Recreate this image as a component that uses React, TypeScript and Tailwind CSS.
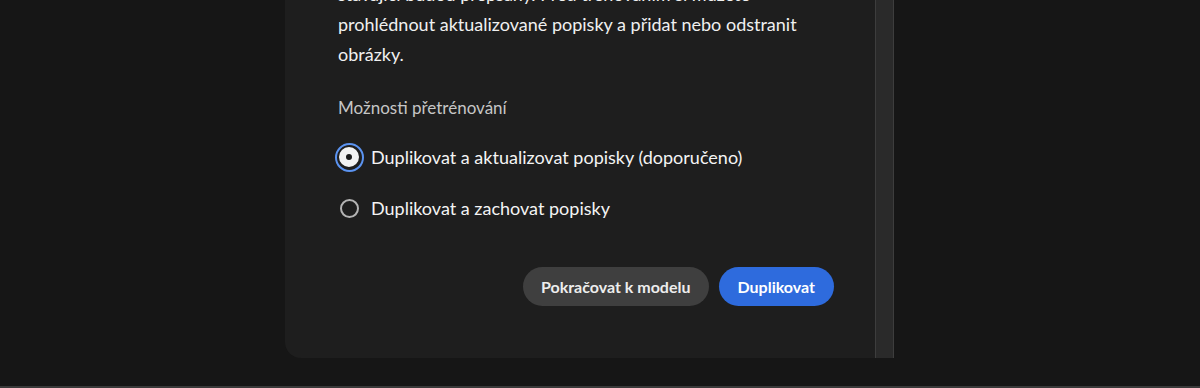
import React, { useState } from 'react';

const options = [
  { id: 'update', label: 'Duplikovat a aktualizovat popisky (doporučeno)' },
  { id: 'keep', label: 'Duplikovat a zachovat popisky' },
];

const Radio = (props: { checked: boolean; focused?: boolean }) => {
  return (
    <span className="flex h-[28px] w-[28px] items-center justify-center">
      {props.checked ? (
        <span
          className={`flex h-[29px] w-[29px] shrink-0 items-center justify-center rounded-full ${
            props.focused ? 'border-2 border-[#5b93f0]' : ''
          }`}
        >
          <span className="h-[20px] w-[20px] rounded-full border-[7px] border-[#f2f2f2] bg-[#1b1b1b]" />
        </span>
      ) : (
        <span className="h-[19px] w-[19px] rounded-full border-2 border-[#b4b4b4]" />
      )}
    </span>
  );
};

const App = () => {
  const [selected, setSelected] = useState('update');

  return (
    <div
      className="box-border h-[388px] w-full overflow-hidden border-b-2 border-[#3a3a3a] bg-[#161616]"
      style={{ fontFamily: 'Lato, "Noto Sans", sans-serif' }}
    >
      <div className="ml-[285px] -mt-[40px] flex h-[398px] w-[609px] overflow-hidden rounded-b-[16px] rounded-br-none bg-[#1e1e1e]">
        <div className="flex flex-1 flex-col pl-[53px] pr-[41px] pt-[19px]">
          <p className="text-[18px] leading-[30px] text-[#f0f0f0]">
            stávající budou přepsány. Před trénováním si můžete prohlédnout
            aktualizované popisky a přidat nebo odstranit obrázky.
          </p>

          <div className="mt-[27px] text-[17px] leading-[24px] text-[#c6c6c6]">
            Možnosti přetrénování
          </div>

          <div className="mt-[23px] flex flex-col gap-[23px]">
            {options.map(opt => (
              <button
                key={opt.id}
                type="button"
                onClick={() => setSelected(opt.id)}
                className="-ml-[3px] flex items-center gap-[8px] text-left"
              >
                <Radio checked={selected === opt.id} focused />
                <span className="text-[18px] leading-[28px] text-[#f4f4f4]">
                  {opt.label}
                </span>
              </button>
            ))}
          </div>

          <div className="mt-[45px] flex justify-end gap-[10px]">
            <button
              type="button"
              className="h-[39px] rounded-full bg-[#3f3f3f] px-[18px] text-[16px] font-bold text-[#ededed]"
            >
              Pokračovat k modelu
            </button>
            <button
              type="button"
              className="h-[39px] rounded-full bg-[#2e6bdd] px-[19px] text-[16px] font-bold text-white"
            >
              Duplikovat
            </button>
          </div>
        </div>
        <div className="box-border w-[19px] border-x border-[#3d3d3d] bg-[#2a2a2a]" />
      </div>
    </div>
  );
};

export default App;
